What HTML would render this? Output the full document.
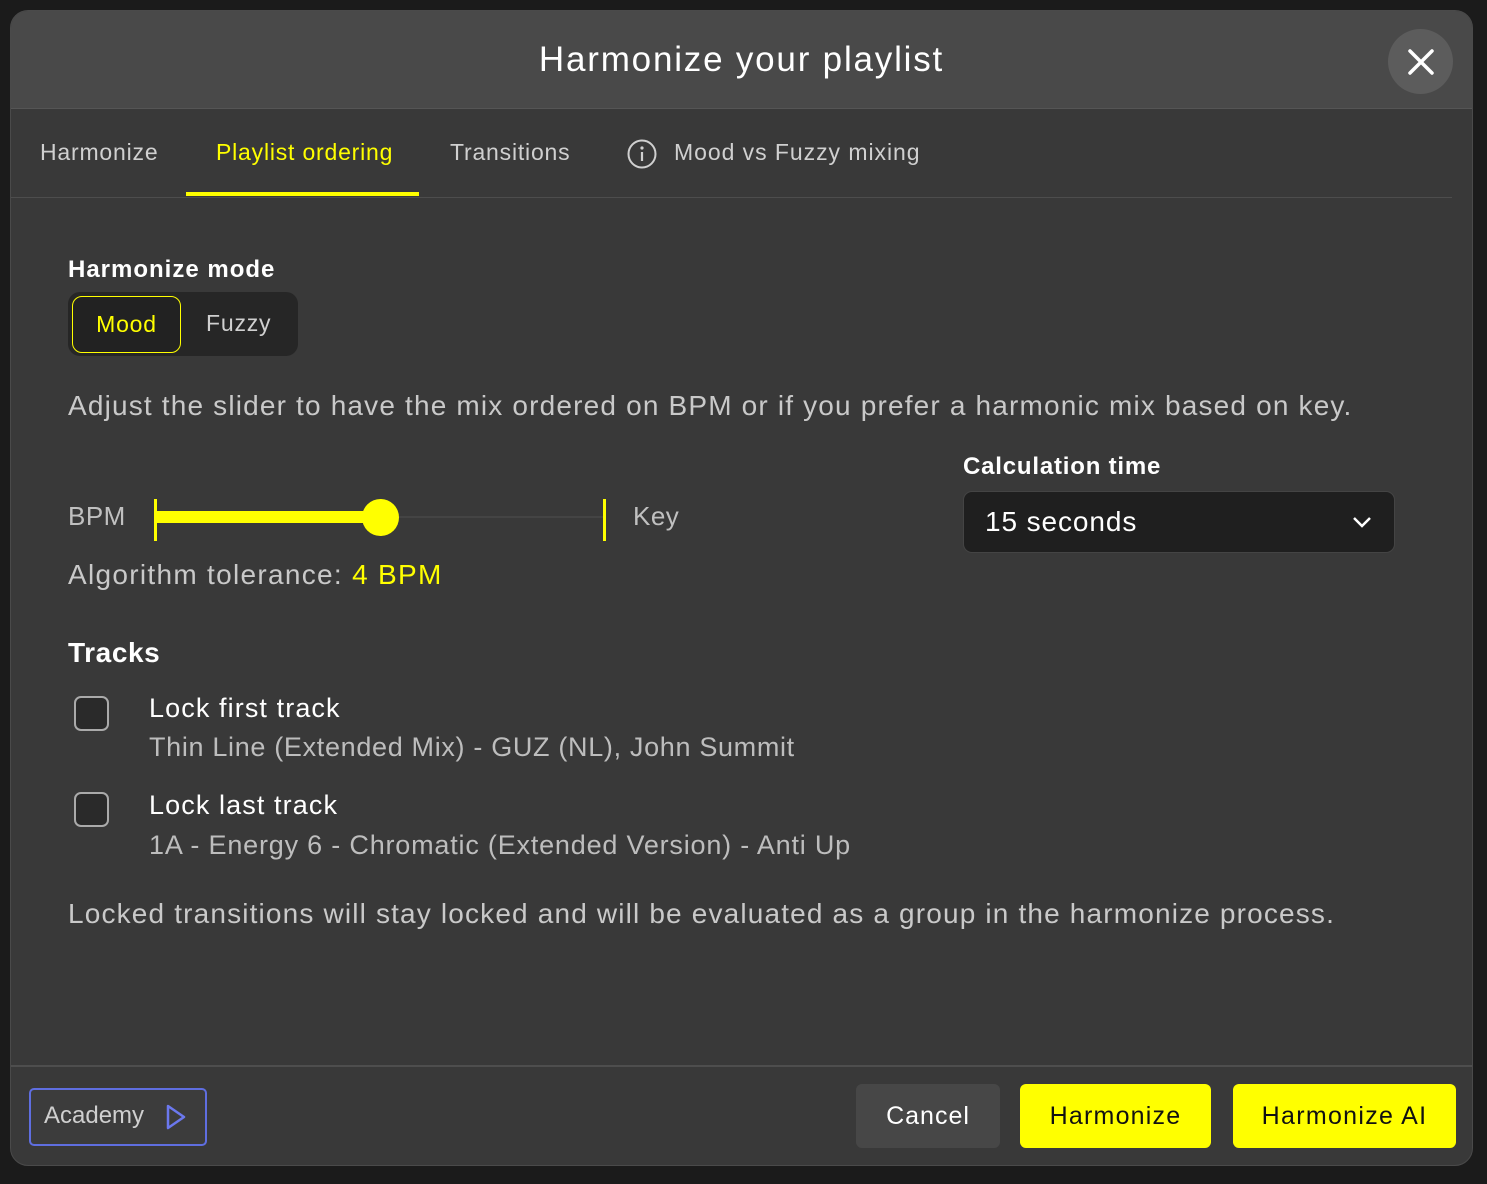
<!DOCTYPE html>
<html><head><meta charset="utf-8"><style>
*{box-sizing:border-box;margin:0;padding:0}
body{width:1487px;height:1184px;background:#1b1b1b;font-family:"Liberation Sans",sans-serif;position:relative;overflow:hidden}
.modal{position:absolute;left:10px;top:10px;width:1463px;height:1156px;background:#393939;border-radius:18px;overflow:hidden;border:1px solid #4a4a4a}
.hdr{position:absolute;left:0;top:0;right:0;height:98px;background:#494949;border-bottom:1px solid #555}
.a{position:absolute;white-space:nowrap}
.t{color:#d0d0d0}
.tab{font-size:23px;letter-spacing:0.8px}
</style></head><body>
<div class="modal">
<div class="hdr"></div>
<div class="a" style="left:0;right:0;top:29px;text-align:center;color:#fff;font-size:35px;letter-spacing:1.8px">Harmonize your playlist</div>
<div class="a" style="left:1377px;top:18px;width:65px;height:65px;border-radius:50%;background:#5c5c5c"></div>
<svg class="a" style="left:1395px;top:36px" width="30" height="30" viewBox="0 0 30 30"><path d="M4 4L26 26M26 4L4 26" stroke="#fff" stroke-width="3.5" stroke-linecap="round"/></svg>

<div class="a t tab" style="left:29px;top:128px">Harmonize</div>
<div class="a tab" style="left:205px;top:128px;color:#ffff00">Playlist ordering</div>
<div class="a" style="left:175px;top:181px;width:233px;height:4px;background:#ffff00"></div>
<div class="a t tab" style="left:439px;top:128px">Transitions</div>
<svg class="a" style="left:615px;top:127px" width="32" height="32" viewBox="0 0 32 32"><circle cx="16" cy="16" r="13.5" fill="none" stroke="#d0d0d0" stroke-width="2"/><circle cx="16" cy="10" r="1.6" fill="#d0d0d0"/><path d="M16 14v9" stroke="#d0d0d0" stroke-width="2.2"/></svg>
<div class="a t tab" style="left:663px;top:128px;letter-spacing:0.95px">Mood vs Fuzzy mixing</div>
<div class="a" style="left:0;right:20px;top:186px;height:1px;background:#4d4d4d"></div>

<div class="a" style="left:57px;top:245px;font-size:24px;font-weight:bold;color:#fff;letter-spacing:1px">Harmonize mode</div>
<div class="a" style="left:57px;top:281px;width:230px;height:64px;border-radius:12px;background:#262626"></div>
<div class="a" style="left:61px;top:285px;width:109px;height:57px;border-radius:10px;border:1.5px solid #ffff00;background:#222;color:#ffff00;font-size:23px;text-align:center;line-height:54px;letter-spacing:0.8px">Mood</div>
<div class="a t" style="left:195px;top:299px;font-size:23px;letter-spacing:0.8px">Fuzzy</div>

<div class="a" style="left:57px;top:379px;font-size:28px;color:#c9c9c9;letter-spacing:1.17px">Adjust the slider to have the mix ordered on BPM or if you prefer a harmonic mix based on key.</div>

<div class="a" style="left:57px;top:490px;font-size:26px;color:#c0c0c0;letter-spacing:0.5px">BPM</div>
<div class="a" style="left:143px;top:488px;width:3px;height:42px;background:#ffff00"></div>
<div class="a" style="left:592px;top:488px;width:3px;height:42px;background:#ffff00"></div>
<div class="a" style="left:146px;top:505px;width:446px;height:2px;background:#444"></div>
<div class="a" style="left:146px;top:500px;width:224px;height:12px;background:#ffff00"></div>
<div class="a" style="left:351px;top:488px;width:37px;height:37px;border-radius:50%;background:#ffff00"></div>
<div class="a" style="left:622px;top:490px;font-size:26px;color:#c0c0c0;letter-spacing:0.5px">Key</div>
<div class="a" style="left:57px;top:548px;font-size:28px;color:#c9c9c9;letter-spacing:1.3px">Algorithm tolerance: <span style="color:#ffff00">4 BPM</span></div>

<div class="a" style="left:952px;top:442px;font-size:24px;font-weight:bold;color:#fff;letter-spacing:0.8px">Calculation time</div>
<div class="a" style="left:952px;top:480px;width:432px;height:62px;border-radius:9px;background:#1f1f1f;border:1px solid #444"></div>
<div class="a" style="left:974px;top:495px;font-size:28px;color:#fff;letter-spacing:0.9px">15 seconds</div>
<svg class="a" style="left:1340px;top:503px" width="22" height="16" viewBox="0 0 22 16"><path d="M3 4l8 8 8-8" fill="none" stroke="#fff" stroke-width="2.5"/></svg>

<div class="a" style="left:57px;top:626px;font-size:28px;font-weight:bold;color:#fff;letter-spacing:0.6px">Tracks</div>
<div class="a" style="left:63px;top:685px;width:35px;height:35px;border-radius:7px;border:2px solid #aaa;background:#2a2a2a"></div>
<div class="a" style="left:138px;top:682px;font-size:27px;color:#fff;letter-spacing:1.1px">Lock first track</div>
<div class="a" style="left:138px;top:721px;font-size:27px;color:#bdbdbd;letter-spacing:0.67px">Thin Line (Extended Mix) - GUZ (NL), John Summit</div>
<div class="a" style="left:63px;top:781px;width:35px;height:35px;border-radius:7px;border:2px solid #aaa;background:#2a2a2a"></div>
<div class="a" style="left:138px;top:779px;font-size:27px;color:#fff;letter-spacing:1.1px">Lock last track</div>
<div class="a" style="left:138px;top:819px;font-size:27px;color:#bdbdbd;letter-spacing:0.8px">1A - Energy 6 - Chromatic (Extended Version) - Anti Up</div>
<div class="a" style="left:57px;top:887px;font-size:28px;color:#c9c9c9;letter-spacing:1.16px">Locked transitions will stay locked and will be evaluated as a group in the harmonize process.</div>

<div class="a" style="left:0;right:0;top:1054px;height:2px;background:#4e4e4e"></div>
<div class="a" style="left:18px;top:1077px;width:178px;height:58px;border-radius:5px;border:2px solid #5f6ee0;background:#3c3c3c"></div>
<div class="a" style="left:33px;top:1091px;font-size:24px;color:#cfcfcf">Academy</div>
<svg class="a" style="left:153px;top:1092px" width="24" height="28" viewBox="0 0 24 28"><path d="M4 3L20 14L4 25Z" fill="none" stroke="#6b78ee" stroke-width="2.5" stroke-linejoin="round"/></svg>
<div class="a" style="left:845px;top:1073px;width:144px;height:64px;border-radius:6px;background:#474747;color:#fff;font-size:25px;text-align:center;line-height:64px;letter-spacing:1px">Cancel</div>
<div class="a" style="left:1009px;top:1073px;width:191px;height:64px;border-radius:6px;background:#ffff00;color:#111;font-size:25px;text-align:center;line-height:64px;letter-spacing:1.2px">Harmonize</div>
<div class="a" style="left:1222px;top:1073px;width:223px;height:64px;border-radius:6px;background:#ffff00;color:#111;font-size:25px;text-align:center;line-height:64px;letter-spacing:1.3px">Harmonize AI</div>
</div>
</body></html>
